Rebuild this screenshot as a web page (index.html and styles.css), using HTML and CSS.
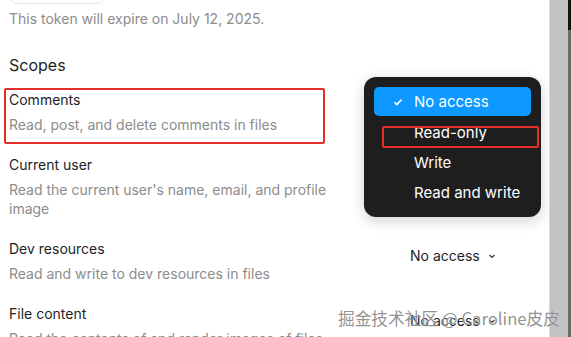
FILE: index.html
```html
<!DOCTYPE html>
<html lang="en">
<head>
    <meta charset="UTF-8">
    <meta name="viewport" content="width=device-width, initial-scale=1.0">
    <title>Personal access token</title>
    <link rel="stylesheet" href="styles.css">
</head>
<body>
    <div class="window">
        <div class="main">
            <div class="field"></div>
            <p class="expire">This token will expire on July 12, 2025.</p>
            <h2 class="heading">Scopes</h2>
            <ul class="scopes">
                <li class="scope">
                    <div class="info">
                        <div class="name">Comments</div>
                        <div class="desc">Read, post, and delete comments in files</div>
                    </div>
                    <div class="select">
                        <span>No access</span>
                        <svg class="chev" width="8" height="8" viewBox="0 0 8 8"><path d="M1.5 3l2.5 2.5 2.5-2.5" fill="none" stroke="#333" stroke-width="1.2"/></svg>
                        <!-- menu opened on this select -->
                        <ul class="menu">
                            <li class="act">
                                <svg class="check" width="10" height="10" viewBox="0 0 10 10"><path d="M1.5 5.2l2.3 2.3 4.7-4.9" fill="none" stroke="#fff" stroke-width="1.6"/></svg>
                                No access
                            </li>
                            <li>Read-only</li>
                            <li>Write</li>
                            <li>Read and write</li>
                        </ul>
                        <div class="mark mark-item"></div>
                    </div>
                    <div class="mark mark-row"></div>
                </li>
                <li class="scope">
                    <div class="info">
                        <div class="name">Current user</div>
                        <div class="desc">Read the current user's name, email, and profile image</div>
                    </div>
                    <div class="select">
                        <span>No access</span>
                        <svg class="chev" width="8" height="8" viewBox="0 0 8 8"><path d="M1.5 3l2.5 2.5 2.5-2.5" fill="none" stroke="#333" stroke-width="1.2"/></svg>
                    </div>
                </li>
                <li class="scope">
                    <div class="info">
                        <div class="name">Dev resources</div>
                        <div class="desc">Read and write to dev resources in files</div>
                    </div>
                    <div class="select">
                        <span>No access</span>
                        <svg class="chev" width="8" height="8" viewBox="0 0 8 8"><path d="M1.5 3l2.5 2.5 2.5-2.5" fill="none" stroke="#333" stroke-width="1.2"/></svg>
                    </div>
                </li>
                <li class="scope">
                    <div class="info">
                        <div class="name">File content</div>
                        <div class="desc">Read the contents of and render images of files</div>
                    </div>
                    <div class="select">
                        <span>No access</span>
                        <svg class="chev" width="8" height="8" viewBox="0 0 8 8"><path d="M1.5 3l2.5 2.5 2.5-2.5" fill="none" stroke="#333" stroke-width="1.2"/></svg>
                    </div>
                </li>
            </ul>
        </div>
        <div class="scrollbar"></div>
        <div class="edge"></div>
        <div class="watermark">掘金技术社区 @ Caroline皮皮</div>
    </div>
</body>
</html>
```

FILE: styles.css
```css
*{
    box-sizing: border-box;
}
ul{
    list-style: none;
    margin: 0;
    padding: 0;
}
body{
    margin: 0;
    font-family: Inter, "Noto Sans", sans-serif;
    color: #1e1e1e;
    background: #fff;
}
.window{
    position: relative;
    display: flex;
    height: 337px;
    overflow: hidden;
}
.main{
    position: relative;
    width: 549px;
    padding-left: 9px;
    overflow: hidden;
}
.field{
    width: 94px;
    height: 30px;
    margin: -26px 0 0 1px;
    border: 1px solid #e6e6e6;
    border-radius: 7px;
}
.expire{
    margin: 6px 0 0;
    font-size: 14px;
    line-height: 18px;
    color: #8c8c8c;
}
.heading{
    margin: 26px 0 0;
    font-size: 16px;
    font-weight: 400;
    line-height: 22px;
}
.scopes{
    margin-top: 15px;
    display: flex;
    flex-direction: column;
    gap: 22px;
}
.scope{
    position: relative;
    display: grid;
    grid-template-columns: 1fr 139px;
}
.info{
    width: 330px;
}
.name{
    font-size: 14px;
    line-height: 18px;
    margin-bottom: 6px;
}
.desc{
    font-size: 14px;
    line-height: 19px;
    color: #8c8c8c;
}
.select{
    position: relative;
    margin-top: 6px;
    height: 18px;
    display: flex;
    align-items: center;
    gap: 8px;
    font-size: 14px;
}
.chev{
    margin-top: 1px;
}
.menu{
    position: absolute;
    left: -46px;
    top: -20px;
    width: 177px;
    padding: 10px;
    background: #1e1e1e;
    border-radius: 12px;
    box-shadow: 0 4px 14px rgba(0,0,0,.18);
    z-index: 2;
}
.menu li{
    display: flex;
    align-items: center;
    height: 30px;
    padding-left: 40px;
    font-size: 15px;
    color: #fff;
}
.menu .act{
    height: 29px;
    margin-bottom: 1px;
    padding-left: 19px;
    gap: 11px;
    background: #0d99ff;
    border-radius: 5px;
}
.mark{
    position: absolute;
    border: 2.5px solid #e5302a;
    border-radius: 2px;
    z-index: 3;
}
.mark-row{
    left: -5px;
    top: -3px;
    width: 321px;
    height: 56px;
}
.mark-item{
    left: -28px;
    top: 29px;
    width: 157px;
    height: 22px;
}
.watermark{
    position: absolute;
    left: 338px;
    top: 307px;
    font-family: "Noto Sans CJK SC", sans-serif;
    font-size: 16.7px;
    line-height: 22px;
    color: rgba(110,110,110,.75);
    white-space: nowrap;
    text-shadow: 0 0 1px #fff;
    z-index: 4;
}
.scrollbar{
    width: 19px;
    background: #c2c2c2;
    border-left: 1px solid #d8d8d8;
}
.edge{
    width: 3px;
    background: linear-gradient(#111 0 30px, #6a6a6a 30px);
}
```
